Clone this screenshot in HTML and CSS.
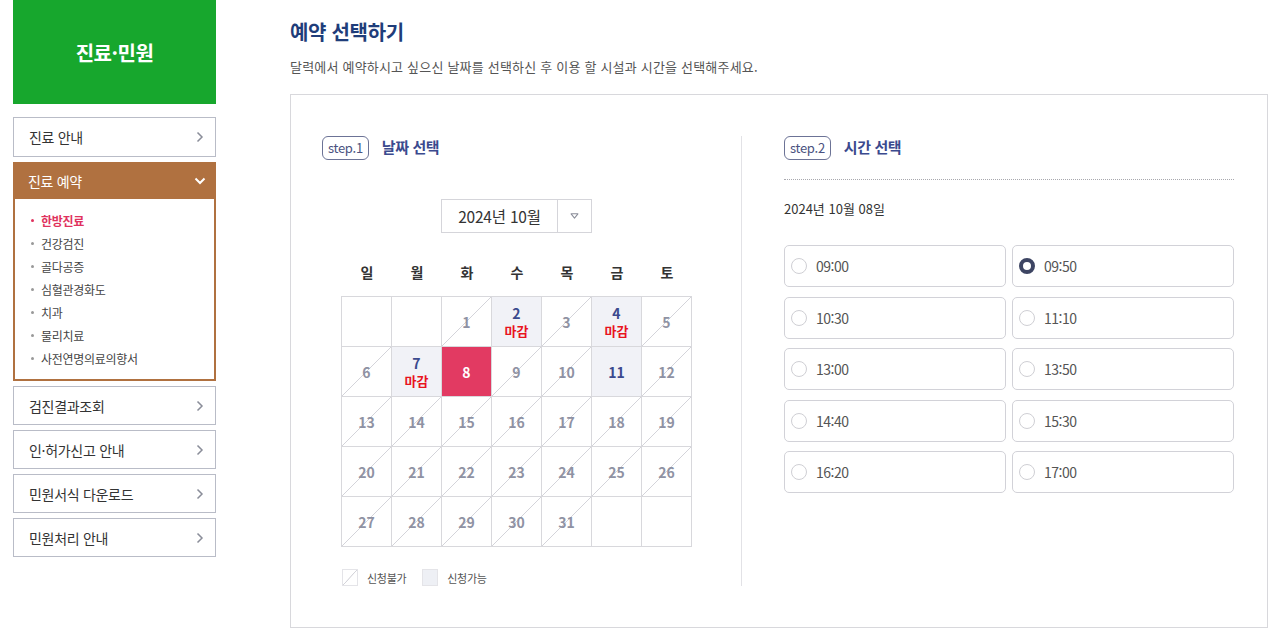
FILE: index.html
```html
<!DOCTYPE html>
<html lang="ko">
<head>
<meta charset="utf-8">
<title>예약 선택하기</title>
<link rel="stylesheet" href="styles.css">
</head>
<body>
<div class="page">
  <aside class="sidebar">
    <div class="side-title">진료·민원</div>
    <ul class="menu">
      <li class="menu-item"><span>진료 안내</span><svg class="chev" viewBox="0 0 8 12" width="8" height="12"><polyline points="1.5,1.5 6,6 1.5,10.5" fill="none" stroke="#8a8d99" stroke-width="1.5"/></svg></li>
      <li class="menu-group">
        <div class="menu-head"><span>진료 예약</span><svg class="chev" viewBox="0 0 12 8" width="12" height="8"><polyline points="1.5,1.5 6,6 10.5,1.5" fill="none" stroke="#fff" stroke-width="2"/></svg></div>
        <ul class="submenu">
          <li class="on">한방진료</li>
          <li>건강검진</li>
          <li>골다공증</li>
          <li>심혈관경화도</li>
          <li>치과</li>
          <li>물리치료</li>
          <li>사전연명의료의향서</li>
        </ul>
      </li>
      <li class="menu-item"><span>검진결과조회</span><svg class="chev" viewBox="0 0 8 12" width="8" height="12"><polyline points="1.5,1.5 6,6 1.5,10.5" fill="none" stroke="#8a8d99" stroke-width="1.5"/></svg></li>
      <li class="menu-item"><span>인·허가신고 안내</span><svg class="chev" viewBox="0 0 8 12" width="8" height="12"><polyline points="1.5,1.5 6,6 1.5,10.5" fill="none" stroke="#8a8d99" stroke-width="1.5"/></svg></li>
      <li class="menu-item"><span>민원서식 다운로드</span><svg class="chev" viewBox="0 0 8 12" width="8" height="12"><polyline points="1.5,1.5 6,6 1.5,10.5" fill="none" stroke="#8a8d99" stroke-width="1.5"/></svg></li>
      <li class="menu-item"><span>민원처리 안내</span><svg class="chev" viewBox="0 0 8 12" width="8" height="12"><polyline points="1.5,1.5 6,6 1.5,10.5" fill="none" stroke="#8a8d99" stroke-width="1.5"/></svg></li>
    </ul>
  </aside>

  <main class="main">
    <h1 class="title">예약 선택하기</h1>
    <p class="desc">달력에서 예약하시고 싶으신 날짜를 선택하신 후 이용 할 시설과 시간을 선택해주세요.</p>

    <section class="box">
      <div class="col-left">
        <div class="step"><span class="badge">step.1</span><span class="step-name">날짜 선택</span></div>
        <div class="month-select">
          <span class="month-text">2024년 10월</span>
          <span class="month-btn"><svg viewBox="0 0 10 7" width="9" height="6"><polygon points="1,1 9,1 5,6" fill="none" stroke="#8a8d99" stroke-width="1.2" stroke-linejoin="round"/></svg></span>
        </div>
        <div class="weekdays">
          <span>일</span><span>월</span><span>화</span><span>수</span><span>목</span><span>금</span><span>토</span>
        </div>
        <div class="cal">
          <div class="cell empty"></div>
          <div class="cell empty"></div>
          <div class="cell off">1</div>
          <div class="cell avail"><b>2</b><em>마감</em></div>
          <div class="cell off">3</div>
          <div class="cell avail"><b>4</b><em>마감</em></div>
          <div class="cell off">5</div>
          <div class="cell off">6</div>
          <div class="cell avail"><b>7</b><em>마감</em></div>
          <div class="cell sel">8</div>
          <div class="cell off">9</div>
          <div class="cell off">10</div>
          <div class="cell avail"><b>11</b></div>
          <div class="cell off">12</div>
          <div class="cell off">13</div>
          <div class="cell off">14</div>
          <div class="cell off">15</div>
          <div class="cell off">16</div>
          <div class="cell off">17</div>
          <div class="cell off">18</div>
          <div class="cell off">19</div>
          <div class="cell off">20</div>
          <div class="cell off">21</div>
          <div class="cell off">22</div>
          <div class="cell off">23</div>
          <div class="cell off">24</div>
          <div class="cell off">25</div>
          <div class="cell off">26</div>
          <div class="cell off">27</div>
          <div class="cell off">28</div>
          <div class="cell off">29</div>
          <div class="cell off">30</div>
          <div class="cell off">31</div>
          <div class="cell empty"></div>
          <div class="cell empty"></div>
        </div>
        <div class="legend">
          <span class="lg-box lg-off"></span><span class="lg-text">신청불가</span>
          <span class="lg-box lg-on"></span><span class="lg-text">신청가능</span>
        </div>
      </div>

      <div class="col-right">
        <div class="step"><span class="badge">step.2</span><span class="step-name">시간 선택</span></div>
        <div class="dotline"></div>
        <div class="date">2024년 10월 08일</div>
        <div class="slots">
          <label class="slot"><span class="radio"></span>09:00</label>
          <label class="slot"><span class="radio checked"></span>09:50</label>
          <label class="slot"><span class="radio"></span>10:30</label>
          <label class="slot"><span class="radio"></span>11:10</label>
          <label class="slot"><span class="radio"></span>13:00</label>
          <label class="slot"><span class="radio"></span>13:50</label>
          <label class="slot"><span class="radio"></span>14:40</label>
          <label class="slot"><span class="radio"></span>15:30</label>
          <label class="slot"><span class="radio"></span>16:20</label>
          <label class="slot"><span class="radio"></span>17:00</label>
        </div>
      </div>
    </section>
  </main>
</div>
</body>
</html>
```

FILE: styles.css
```css
* { box-sizing: border-box; }
html, body { margin: 0; padding: 0; background: #fff; }
body {
  font-family: "Noto Sans CJK KR", "Noto Sans", sans-serif;
  color: #333;
  width: 1280px;
  height: 638px;
  overflow: hidden;
}
ul { list-style: none; margin: 0; padding: 0; }

.page {
  display: flex;
  padding-left: 13px;
  gap: 74px;
}

/* Sidebar */
.sidebar { width: 203px; flex: none; }
.side-title {
  height: 104px;
  background: #17a72d;
  color: #fff;
  font-size: 20px;
  font-weight: 700;
  display: flex;
  align-items: center;
  justify-content: center;
  letter-spacing: -0.5px;
}
.menu {
  margin-top: 13px;
  display: flex;
  flex-direction: column;
  gap: 5px;
}
.menu-item {
  height: 39px;
  border: 1px solid #b9bcc7;
  display: flex;
  align-items: center;
  justify-content: space-between;
  padding: 0 11px 0 15px;
  font-size: 14px;
  color: #333;
  letter-spacing: -0.3px;
}
.menu-item:first-child { height: 40px; }
.menu-head {
  height: 37px;
  background: #b07140;
  color: #fff;
  display: flex;
  align-items: center;
  justify-content: space-between;
  padding: 0 10px 0 15px;
  font-size: 14px;
  letter-spacing: -0.3px;
}
.submenu {
  border: 2px solid #b07140;
  border-top: 0;
  padding: 10px 0 9px 15px;
}
.submenu li {
  font-size: 12px;
  line-height: 23px;
  color: #444;
  position: relative;
  padding-left: 11px;
  letter-spacing: -0.3px;
}
.submenu li::before {
  content: "";
  position: absolute;
  left: 1px;
  top: 10px;
  width: 3px;
  height: 3px;
  border-radius: 50%;
  background: #999;
}
.submenu li.on { color: #e0325e; font-weight: 700; }
.submenu li.on::before { background: #e0325e; }

/* Main */
.main { width: 978px; flex: none; padding-top: 18px; }
.title {
  margin: 0;
  font-size: 20px;
  line-height: 28px;
  font-weight: 700;
  color: #1f3d7a;
  letter-spacing: -0.3px;
}
.desc {
  margin: 11px 0 0;
  font-size: 13px;
  line-height: 20px;
  color: #555;
  letter-spacing: 0.2px;
}
.box {
  margin-top: 17px;
  border: 1px solid #d8d8dc;
  height: 534px;
  padding: 41px 32px 41px 31px;
  display: flex;
}
.col-left {
  flex: none;
  display: flex;
  flex-direction: column;
  align-items: center;
  border-right: 1px solid #e2e2e6;
  width: 420px;
  padding-right: 30px;
}
.col-left .step { align-self: flex-start; }
.col-right {
  flex: 1;
  padding-left: 42px;
}

.step { display: flex; align-items: center; height: 24px; }
.badge {
  height: 24px;
  padding: 0 5px;
  border: 1px solid #6c7396;
  border-radius: 6px;
  font-size: 13px;
  line-height: 22px;
  color: #4a5280;
  letter-spacing: -0.3px;
}
.step-name {
  margin-left: 13px;
  font-size: 15px;
  font-weight: 700;
  color: #3b4a8e;
  letter-spacing: -0.4px;
  margin-top: -4px;
}

.month-select {
  margin-top: 39px;
  width: 151px;
  height: 34px;
  border: 1px solid #d5d5da;
  display: flex;
}
.month-text {
  flex: 1;
  display: flex;
  align-items: center;
  justify-content: center;
  font-size: 15.5px;
  color: #333;
  border-right: 1px solid #d5d5da;
  letter-spacing: -0.2px;
}
.month-btn {
  width: 33px;
  display: flex;
  align-items: center;
  justify-content: center;
}

.weekdays {
  margin-top: 26px;
  width: 351px;
  display: grid;
  grid-template-columns: repeat(7, 1fr);
  height: 26px;
  align-items: center;
  text-align: center;
  font-size: 14px;
  font-weight: 700;
  color: #333;
  padding-left: 1px;
}

.cal {
  margin-top: 11px;
  width: 351px;
  display: grid;
  grid-template-columns: repeat(7, 50px);
  grid-auto-rows: 50px;
  border-top: 1px solid #d8d8dc;
  border-left: 1px solid #d8d8dc;
}
.cell {
  border-right: 1px solid #d8d8dc;
  border-bottom: 1px solid #d8d8dc;
  display: flex;
  flex-direction: column;
  align-items: center;
  justify-content: center;
  font-size: 14px;
  font-weight: 700;
  line-height: 18px;
}
.cell.off {
  color: #8f92a3;
  background: linear-gradient(to bottom right, transparent calc(50% - 0.6px), #d4d4da calc(50% - 0.2px), #d4d4da calc(50% + 0.2px), transparent calc(50% + 0.6px));
}
.cell.avail { background: #f1f2f7; }
.cell.avail b { color: #3b4a8e; font-weight: 700; }
.cell.avail em { font-style: normal; color: #e8141e; font-size: 13px; font-weight: 700; }
.cell.sel { background: #e23a62; color: #fff; }

.legend {
  align-self: flex-start;
  margin-left: 20px;
  margin-top: 22px;
  display: flex;
  align-items: center;
  height: 17px;
}
.lg-box {
  width: 16px;
  height: 17px;
  border: 1px solid #e4e4e8;
}
.lg-off {
  background: linear-gradient(to bottom right, transparent calc(50% - 0.6px), #d4d4da calc(50% - 0.2px), #d4d4da calc(50% + 0.2px), transparent calc(50% + 0.6px));
}
.lg-on { background: #eef0f5; margin-left: 16px; }
.lg-text { margin-left: 9px; font-size: 11px; color: #555; letter-spacing: -0.3px; }

.dotline {
  margin-top: 19px;
  border-top: 1px dotted #a8a8ae;
  width: 450px;
}
.date {
  margin-top: 19px;
  font-size: 13px;
  line-height: 20px;
  color: #333;
  letter-spacing: 0;
}
.slots {
  margin-top: 26px;
  width: 450px;
  display: grid;
  grid-template-columns: 222px 222px;
  column-gap: 6px;
  row-gap: 9.5px;
}
.slot {
  height: 42px;
  border: 1px solid #d2d2d8;
  border-radius: 5px;
  display: flex;
  align-items: center;
  padding-left: 6px;
  font-size: 14px;
  color: #555;
  letter-spacing: -0.5px;
}
.radio {
  width: 16px;
  height: 16px;
  border: 1px solid #cfcfd4;
  border-radius: 50%;
  margin-right: 9px;
  background: #fff;
}
.radio.checked { border: 4.5px solid #3d4563; }
```
